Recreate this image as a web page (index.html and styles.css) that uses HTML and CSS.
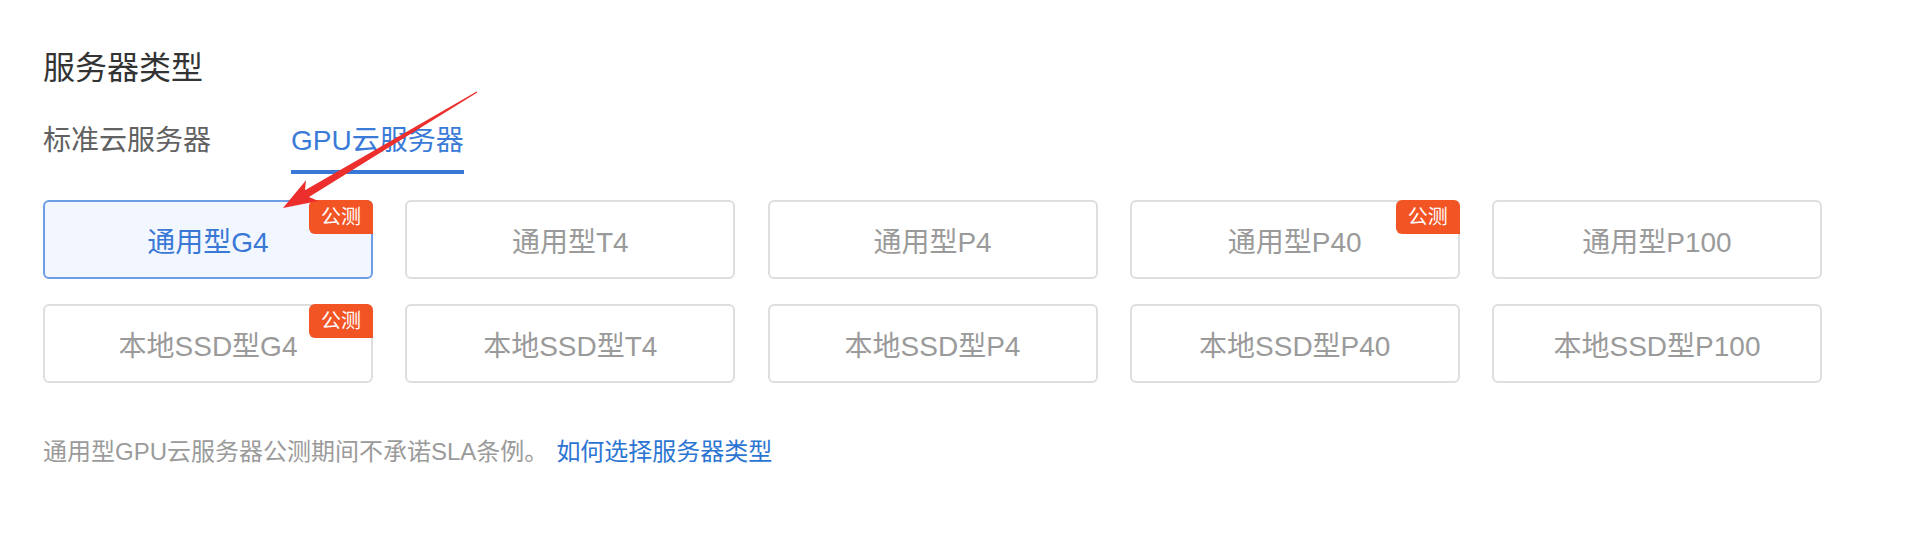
FILE: index.html
```html
<!DOCTYPE html>
<html lang="zh-CN">
<head>
<meta charset="utf-8">
<title>服务器类型</title>
<link rel="stylesheet" href="styles.css">
</head>
<body>
<div class="page">
  <h2 class="title">服务器类型</h2>
  <div class="tabs">
    <div class="tab">标准云服务器</div>
    <div class="tab active">GPU云服务器</div>
  </div>
  <div class="grid">
    <div class="card selected">通用型G4<span class="badge">公测</span></div>
    <div class="card">通用型T4</div>
    <div class="card">通用型P4</div>
    <div class="card">通用型P40<span class="badge">公测</span></div>
    <div class="card">通用型P100</div>
    <div class="card">本地SSD型G4<span class="badge">公测</span></div>
    <div class="card">本地SSD型T4</div>
    <div class="card">本地SSD型P4</div>
    <div class="card">本地SSD型P40</div>
    <div class="card">本地SSD型P100</div>
  </div>
  <p class="note">通用型GPU云服务器公测期间不承诺SLA条例。<a class="link" href="#">如何选择服务器类型</a></p>
</div>
<svg class="arrow" width="1917" height="539" viewBox="0 0 1917 539">
  <polygon fill="#ec2f2c" points="283,208 318.4,200.9 309,197 477.3,92.4 476.7,91.6 305,190.2 306,180.3"/>
</svg>
</body>
</html>
```

FILE: styles.css
```css
html, body {
  margin: 0;
  padding: 0;
  background: #ffffff;
}
body {
  font-family: "Liberation Sans", "Noto Sans CJK SC", sans-serif;
  position: relative;
  width: 1917px;
  height: 539px;
  overflow: hidden;
}
.page {
  padding: 52px 0 0 43px;
}
.title {
  margin: 0;
  font-size: 32px;
  line-height: 32px;
  font-weight: normal;
  color: #333333;
}
.tabs {
  display: flex;
  gap: 80px;
  margin-top: 43px;
}
.tab {
  font-size: 28px;
  line-height: 28px;
  color: #616161;
  padding-bottom: 15px;
  border-bottom: 4px solid transparent;
}
.tab.active {
  color: #3a7bd8;
  border-bottom-color: #3a78d8;
}
.grid {
  display: grid;
  grid-template-columns: repeat(5, 330px);
  column-gap: 32.25px;
  row-gap: 25px;
  margin-top: 26px;
}
.card {
  position: relative;
  box-sizing: border-box;
  height: 79px;
  border: 2px solid #dedede;
  border-radius: 6px;
  display: flex;
  align-items: center;
  justify-content: center;
  font-size: 28px;
  color: #9a9a9a;
  background: #ffffff;
}
.card.selected {
  border-color: #6d9de6;
  background: #f2f7ff;
  color: #3a78d6;
}
.badge {
  position: absolute;
  top: -2px;
  right: -2px;
  width: 64px;
  height: 34px;
  background: #f35424;
  color: #ffffff;
  font-size: 20px;
  line-height: 34px;
  text-align: center;
  border-radius: 6px 6px 0 6px;
}
.note {
  margin: 57px 0 0 0;
  font-size: 24px;
  line-height: 24px;
  color: #9b9b9b;
}
.link {
  color: #2c75d2;
  text-decoration: none;
  margin-left: 8px;
}
.arrow {
  position: absolute;
  left: 0;
  top: 0;
  pointer-events: none;
}
```
